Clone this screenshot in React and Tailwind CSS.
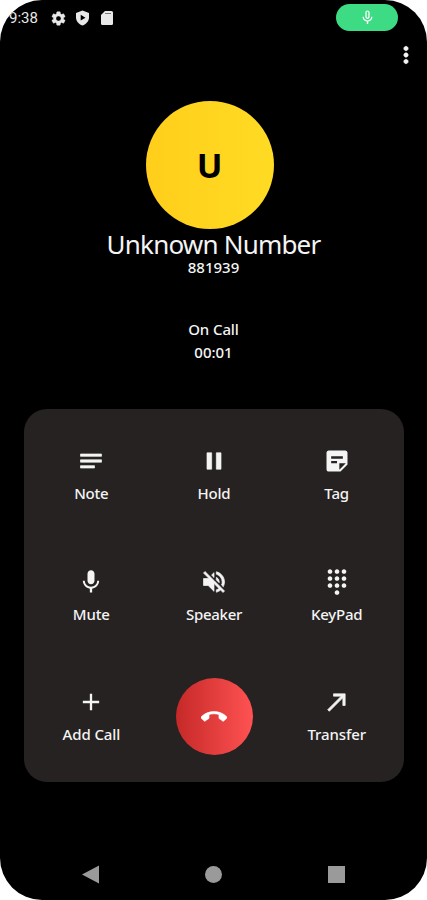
import React from "react";
import {
  MdCallEnd,
  MdCallMade,
  MdAdd,
  MdDialpad,
  MdMic,
  MdMicNone,
  MdNotes,
  MdPause,
  MdSettings,
  MdStickyNote2,
  MdVolumeOff,
  MdMoreVert,
} from "react-icons/md";

// thickens the glyph but leaves the empty bounding path alone
const bold = "[&_path:not([fill=none])]:stroke-[0.6px]";

const actions = [
  { label: "Note", icon: MdNotes, text: "tracking-[-0.2px]", weight: bold },
  { label: "Hold", icon: MdPause, text: "tracking-[-0.2px]", weight: bold },
  { label: "Tag", icon: MdStickyNote2, text: "tracking-[-0.1px]" },
  { label: "Mute", icon: MdMic, text: "tracking-[-0.1px]" },
  { label: "Speaker", icon: MdVolumeOff, text: "tracking-[-0.3px]", weight: bold },
  { label: "KeyPad", icon: MdDialpad, text: "tracking-[-0.2px]" },
  { label: "Add Call", icon: MdAdd, text: "tracking-[-0.1px]" },
  { label: "End", icon: MdCallEnd, end: true },
  { label: "Transfer", icon: MdCallMade, text: "tracking-[-0.1px]", weight: bold },
];

const StatusBar = () => (
  <div className="flex h-[34px] items-center justify-between pl-[9px] pr-[29px]">
    <div className="flex items-center pt-0.5 text-[#e8e8e8]">
      <span className="w-[41px] font-['Roboto',sans-serif] text-[15px] leading-4">
        9:38
      </span>
      <MdSettings size={17} className={bold} />
      <svg className="ml-[8px]" width="15" height="16" viewBox="0 0 15 16">
        <path
          fill="currentColor"
          fillRule="evenodd"
          d="M7.5 0.5 14 3v4.5c0 3.6-2.6 6.7-6.5 8-3.9-1.3-6.5-4.4-6.5-8V3zM5.7 4.8v5.8l4.8-2.9z"
        />
      </svg>
      <svg className="ml-[10px]" width="14" height="16" viewBox="0 0 14 16">
        <path
          fill="currentColor"
          d="M5 1h6.5A1.5 1.5 0 0 1 13 2.500V13.500A1.500 1.500 0 0 1 11.500 15h-9A1.500 1.500 0 0 1 1 13.500V5z"
        />
        <path stroke="#777" strokeWidth="1" d="M5 3.500h6" />
      </svg>
    </div>
    <div className="flex h-[27px] w-[62px] items-center justify-center rounded-full bg-[#3ddc84] text-white">
      <MdMicNone size={17} />
    </div>
  </div>
);

const Action = ({ label, icon: Icon, text, weight, end }) => {
  if (end) {
    return (
      <button
        aria-label={label}
        className="-mt-[10px] ml-px flex size-[77px] items-center justify-center justify-self-center rounded-full bg-linear-to-r from-[#c62828] to-[#ff5252] text-white"
      >
        <Icon size={26} className={bold} />
      </button>
    );
  }
  return (
    <button className="flex flex-col items-center self-start text-[#f4f4f4]">
      <Icon size={28} className={weight} />
      <span
        className={`mt-2 whitespace-nowrap text-[15px] leading-5 font-medium ${text}`}
      >
        {label}
      </span>
    </button>
  );
};

const NavBar = () => (
  <div className="grid h-[52px] grid-cols-3 items-center justify-items-center pr-[28px] pl-[29px] text-[#9a9a9a]">
    <svg width="17" height="19" viewBox="0 0 17 19">
      <path fill="currentColor" d="M0 9.500 17 0.500v18z" />
    </svg>
    <div className="size-[17px] rounded-full bg-current" />
    <div className="mr-px size-[17px] bg-current" />
  </div>
);

const App = () => {
  return (
    <div className="h-[900px] w-[427px] bg-white">
      <div className="flex h-full w-full flex-col overflow-hidden rounded-[42px] bg-black font-['Noto_Sans',sans-serif] text-[#f4f4f4]">
        <StatusBar />
        <div className="flex h-[42px] items-center justify-end pr-2">
          <MdMoreVert size={26} className={bold} />
        </div>

        {/* Caller details */}
        <div className="mt-[25px] flex flex-col items-center">
          <div className="mr-2 flex size-32 items-center justify-center rounded-full bg-linear-to-r from-[#ffce1a] to-[#ffdb24] text-[34px] font-bold text-black">
            U
          </div>
          <h1 className="text-[26px] leading-[30px] tracking-[-0.8px]">
            Unknown Number
          </h1>
          <p className="text-[15px] leading-4 font-medium">881939</p>
          <p className="mt-[43px] text-[15px] leading-[23px] font-medium tracking-[-0.1px]">
            On Call
          </p>
          <p className="text-[15px] leading-[23px] font-medium">00:01</p>
        </div>

        <div className="mt-[45px] ml-[24px] h-[373px] w-[380px] rounded-[23px] bg-[#252221] px-[6px] pt-[38px]">
          <div className="grid auto-rows-[120.6px] grid-cols-3">
            {actions.map((action) => (
              <Action key={action.label} {...action} />
            ))}
          </div>
        </div>

        <div className="mt-auto">
          <NavBar />
        </div>
      </div>
    </div>
  );
};

export default App;
